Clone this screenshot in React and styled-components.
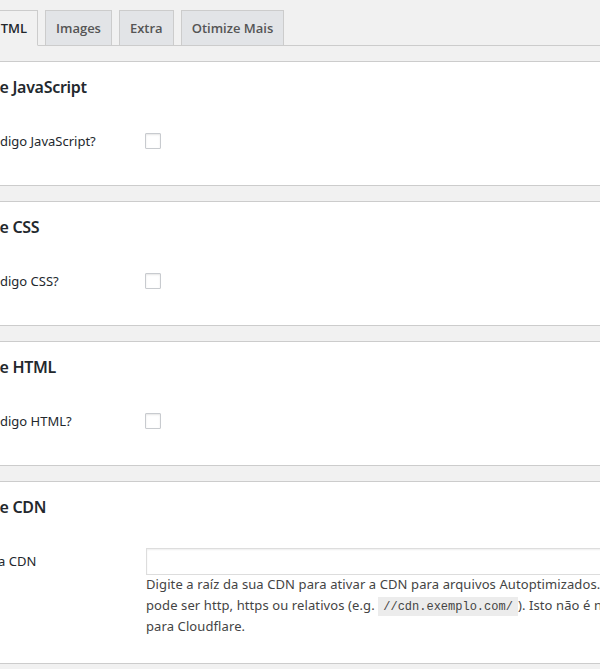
import React from "react";
import styled, { createGlobalStyle } from "styled-components";

const GlobalStyle = createGlobalStyle`
  html, body {
    margin: 0;
    background: #f1f1f1;
    overflow: hidden;
  }
  body {
    font-family: "Noto Sans", "Open Sans", sans-serif;
    font-size: 13px;
    color: #444;
  }
`;

const Page = styled.div`
  width: 600px;
  height: 669px;
  overflow: hidden;
`;

// settings page, its left part is scrolled out of view
const Wrap = styled.div`
  width: 820px;
  margin-left: -82px;
`;

const NavBar = styled.nav`
  display: flex;
  align-items: flex-end;
  padding: 10px 0 0 5px;
  border-bottom: 1px solid #ccc;
`;

const Tab = styled.a`
  display: block;
  margin-left: ${(p) => (p.$first ? "0" : "7px")};
  margin-bottom: ${(p) => (p.$active ? "-1px" : "0")};
  padding: 5px 10px;
  border: 1px solid #ccc;
  border-bottom: ${(p) => (p.$active ? "1px solid #f1f1f1" : "none")};
  background: ${(p) => (p.$active ? "#f1f1f1" : "#e2e4e7")};
  color: ${(p) => (p.$active ? "#23282d" : "#555")};
  font-family: "Open Sans", sans-serif;
  font-size: 13px;
  font-weight: 600;
  line-height: 24px;
  white-space: nowrap;
  text-decoration: none;
`;

const List = styled.ul`
  list-style: none;
  margin: 15px 0 0;
  padding: 0;
`;

const Item = styled.li`
  margin: 0 0 15px;
  padding: 13px 0 0 11px;
  background: #fff;
  border: 1px solid #ccc;
`;

const Title = styled.h2`
  margin: 0;
  color: #23282d;
  font-size: 16px;
  font-weight: 600;
  line-height: 24px;
  letter-spacing: -0.3px;
  white-space: nowrap;
`;

const Row = styled.div`
  display: flex;
`;

const Th = styled.div`
  flex: none;
  width: 216px;
  padding: 32px 0 34px;
  color: #23282d;
  font-size: 13px;
  line-height: 20px;
  white-space: nowrap;
`;

const Td = styled.div`
  flex: 1;
  padding: 29px 0 26px;
`;

const Check = styled.span`
  display: block;
  width: 14px;
  height: 14px;
  margin: 5px 0 0 -1px;
  border: 1px solid #c8cbcf;
  border-radius: 1px;
  background: #fff;
  box-shadow: inset 0 1px 2px rgba(0, 0, 0, 0.1);
`;

const TextInput = styled.input`
  display: block;
  box-sizing: border-box;
  width: 520px;
  height: 27px;
  margin: 0;
  padding: 2px 6px;
  border: 1px solid #ddd;
  background: #fff;
  box-shadow: inset 0 1px 2px rgba(0, 0, 0, 0.07);
  font: inherit;
`;

const Description = styled.p`
  margin: -1px 0 0;
  color: #444;
  font-size: 13px;
  line-height: 21px;
  letter-spacing: 0.1px;
  white-space: nowrap;
`;

const Code = styled.code`
  padding: 3px 5px 2px;
  background: #ececec;
  color: #444;
  font-family: "Liberation Mono", monospace;
  font-size: 12px;
  line-height: 0;
  letter-spacing: 0;
`;

const tabs = ["JS, CSS & HTML", "Images", "Extra", "Otimize Mais"];

const sections = [
  { title: "Opções de JavaScript", label: "Otimizar código JavaScript?" },
  { title: "Opções de CSS", label: "Otimizar código CSS?" },
  { title: "Opções de HTML", label: "Otimizar código HTML?" },
];

export default function App() {
  return (
    <Page>
      <GlobalStyle />
      <Wrap>
        <NavBar>
          {tabs.map((t, i) => (
            <Tab key={t} $first={i === 0} $active={i === 0}>
              {t}
            </Tab>
          ))}
        </NavBar>

        <List>
          {sections.map((s) => (
            <Item key={s.title}>
              <Title>{s.title}</Title>
              <Row>
                <Th>{s.label}</Th>
                <Td>
                  <Check />
                </Td>
              </Row>
            </Item>
          ))}

          <Item>
            <Title>Opções de CDN</Title>
            <Row>
              <Th>URL base da CDN</Th>
              <Td>
                <TextInput type="text" defaultValue="" />
                <Description>
                  Digite a raíz da sua CDN para ativar a CDN para arquivos Autoptimizados. A URL
                  <br />
                  pode ser http, https ou relativos (e.g. <Code>//cdn.exemplo.com/</Code>). Isto não é necessário
                  <br />
                  para Cloudflare.
                </Description>
              </Td>
            </Row>
          </Item>
        </List>
      </Wrap>
    </Page>
  );
}
